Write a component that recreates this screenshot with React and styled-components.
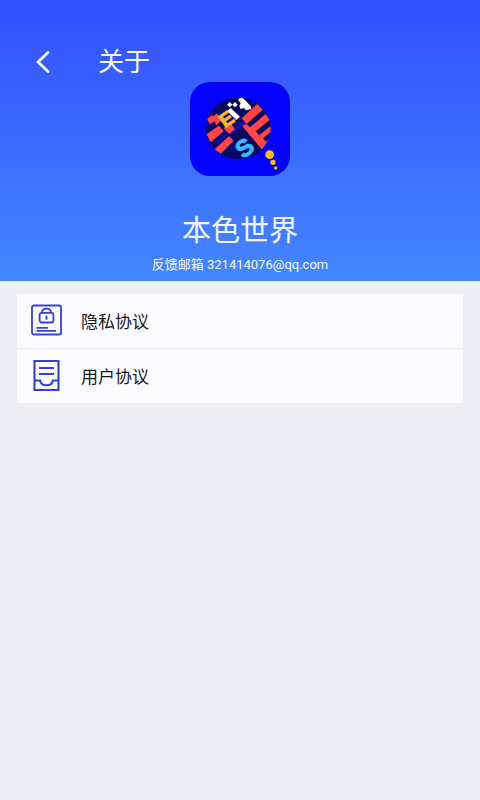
import React from "react";
import styled, { createGlobalStyle } from "styled-components";

const GlobalStyle = createGlobalStyle`
	* {
		box-sizing: border-box;
	}
	body {
		margin: 0;
		background: #eeeff4;
		font-family: Roboto, "Noto Sans CJK SC", sans-serif;
	}
`;

const BackIcon = () => (
	<svg width="14" height="22" viewBox="0 0 14 22" fill="none" aria-hidden="true">
		<path
			d="M12 1.5L2 11l10 9.5"
			stroke="#f4f8ff"
			strokeWidth="2.8"
			strokeLinecap="round"
			strokeLinejoin="round"
		/>
	</svg>
);

const Logo = () => (
	<svg width="100" height="94" viewBox="30 21 300 282" aria-hidden="true">
		<defs>
			<clipPath id="globe">
				<ellipse cx="175" cy="160" rx="97" ry="92" />
			</clipPath>
		</defs>
		<rect x="30" y="21" width="300" height="282" rx="60" fill="#0202fa" />
		<g clipPath="url(#globe)">
			<rect x="75" y="65" width="200" height="190" fill="#08085c" />
			<g stroke="#0b0bc4" strokeWidth="8">
				<path d="M80 152l42-34M150 226l38-32M150 178l50-44M214 84l30-12M84 182l26-20M110 204l30-26" />
			</g>
			<g fill="#ff4548">
				<path d="M185 130l47-43 16 17-48 43z" />
				<path d="M186 152l14-5 10 10 47-40 12 18-42 34 10 12 36-29 4 15-28 23 9 10 26-22-4 28-20 20-14-2z" />
				<path d="M80 133l16-13 11 15-16 13z" />
				<path d="M97 127l14-12 13 22-15 13z" />
				<path d="M79 178l38-26 14 17-39 33z" />
				<path d="M131 159l20-16 14 20-18 14z" />
				<path d="M104 223l43-40 14 15-39 38z" />
			</g>
			<g fill="#fff">
				<path d="M141 108l11-9 28 26-11 10z" />
				<path d="M149 81l8 8-8 8-8-8zM165 81l8 8-8 8-8-8z" />
				<path d="M174 74l10-9 14 13 14 16 2 8-16 4-6-7-10 3-4-10 4-7z" />
			</g>
			<g
				fontFamily="Liberation Sans"
				fontWeight="700"
				textAnchor="middle"
				strokeWidth="3"
			>
				<text
					transform="translate(151 149) rotate(-35)"
					fontSize="58"
					fill="#fdb52b"
					stroke="#fdb52b"
				>
					E
				</text>
				<text
					transform="translate(210 237) rotate(-40)"
					fontSize="72"
					fill="#39b9fb"
					stroke="#39b9fb"
				>
					S
				</text>
			</g>
		</g>
		<g fill="#ffb923">
			<circle cx="269" cy="239" r="13" />
			<circle cx="279" cy="262" r="8" />
			<circle cx="287" cy="279" r="5" />
		</g>
	</svg>
);

const PrivacyIcon = () => (
	<svg
		width="32"
		height="32"
		viewBox="0 0 32 32"
		fill="none"
		stroke="#3442cf"
		strokeWidth="1.8"
		strokeLinecap="round"
		aria-hidden="true"
	>
		<rect x="1" y="1.5" width="29" height="29" rx="1.8" />
		<rect x="8.6" y="8.9" width="13.8" height="9.6" rx="2" />
		<path d="M11 8.7v-.2C11 3.3 20 3.3 20 8.5v.2M15.5 12.5v2.4M6.3 23.9h10M6.3 26.9h18" />
	</svg>
);

const AgreementIcon = () => (
	<svg
		width="32"
		height="32"
		viewBox="0 0 32 32"
		fill="none"
		stroke="#3442cf"
		strokeWidth="2.1"
		aria-hidden="true"
	>
		<path d="M3.5 2h24v29h-24z" />
		<path d="M8 9h15M8 15h15M3.5 21.5h5.6c1 6.4 11.8 6.4 12.8 0h5.6" />
	</svg>
);

const items = [
	{ label: "隐私协议", href: "#privacy", Icon: PrivacyIcon },
	{ label: "用户协议", href: "#agreement", Icon: AgreementIcon }
];

const App = () => (
	<>
		<GlobalStyle />
		<Header>
			<TopBar>
				<BackButton type="button" aria-label="返回">
					<BackIcon />
				</BackButton>
				<Title>关于</Title>
			</TopBar>
			<Logo />
			<AppName>本色世界</AppName>
			<Feedback>反馈邮箱 321414076@qq.com</Feedback>
		</Header>
		<List>
			{items.map(({ label, href, Icon }) => (
				<Item key={href}>
					<ItemLink href={href}>
						<Icon />
						{label}
					</ItemLink>
				</Item>
			))}
		</List>
	</>
);

const Header = styled.header`
	display: flex;
	flex-direction: column;
	align-items: center;
	padding: 42px 0 6px;
	background: linear-gradient(#324fff, #4487ff);
	color: #f4f8ff;
`;

const TopBar = styled.div`
	display: flex;
	align-items: center;
	align-self: stretch;
	height: 40px;
`;

const BackButton = styled.button`
	display: flex;
	align-items: center;
	justify-content: center;
	width: 86px;
	height: 40px;
	margin-right: 12px;
	padding: 0;
	border: 0;
	background: none;
	cursor: pointer;
`;

const Title = styled.h1`
	margin: 0;
	font-size: 26px;
	font-weight: 400;
	line-height: 40px;
`;

const AppName = styled.h2`
	margin: 35px 0 4px;
	font-size: 29px;
	font-weight: 400;
	line-height: 40px;
`;

const Feedback = styled.p`
	margin: 0;
	font-size: 13px;
	line-height: 20px;
`;

const List = styled.ul`
	margin: 13px 17px;
	padding: 0;
	background: #fcfbfe;
	list-style: none;
`;

const Item = styled.li`
	& + & {
		border-top: 1px solid #ececf0;
	}
`;

const ItemLink = styled.a`
	display: flex;
	align-items: center;
	gap: 18px;
	height: 54px;
	padding: 0 14px 2px;
	color: #17171c;
	font-size: 17px;
	text-decoration: none;
`;

export default App;
